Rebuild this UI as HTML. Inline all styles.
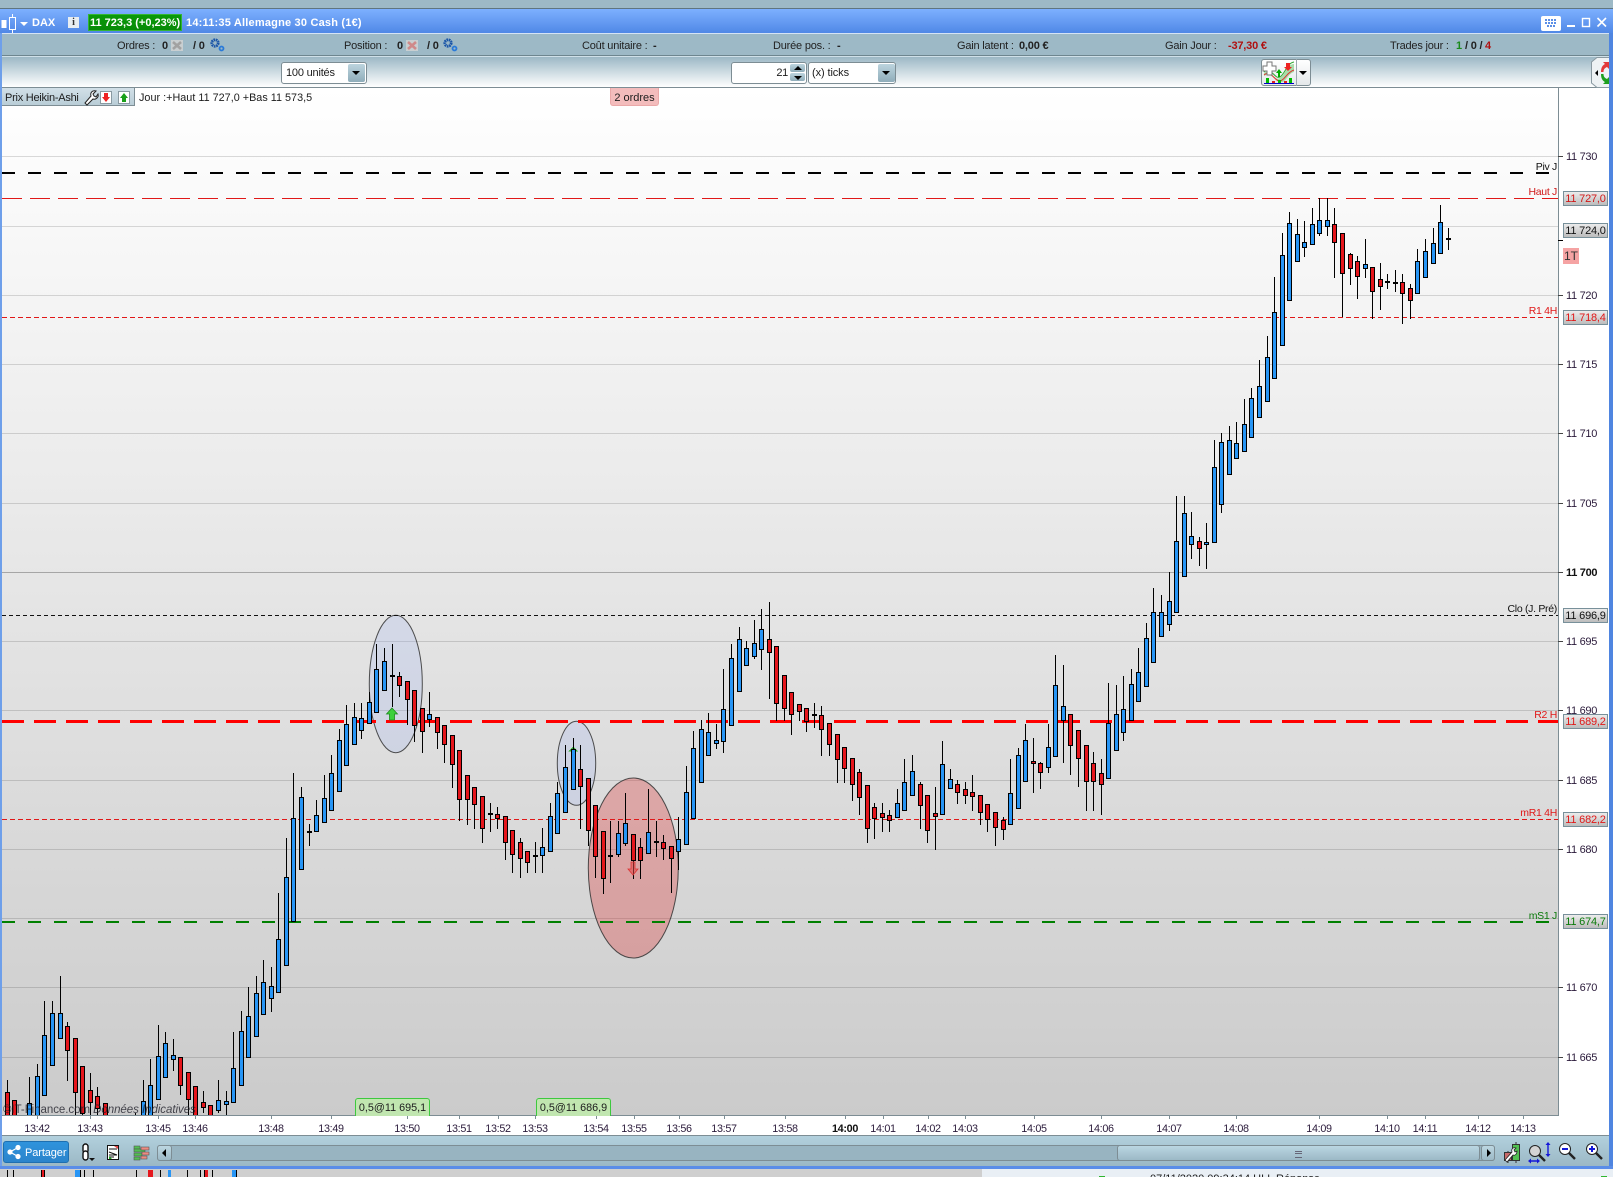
<!DOCTYPE html>
<html><head><meta charset="utf-8"><title>DAX</title>
<style>
html,body{margin:0;padding:0;width:1613px;height:1177px;overflow:hidden;background:#ccc}
body{position:relative;font-family:"Liberation Sans",sans-serif;font-size:11px;color:#1c1c1c}
.a{position:absolute}
.t{position:absolute;white-space:nowrap;line-height:14px;height:14px;letter-spacing:-.3px}
.s{font-size:11px;color:#222;top:39px;letter-spacing:-.2px}
.b{font-weight:bold}
.w{color:#fff}
.ax{left:1566px;font-size:11px;color:#2a1a3a}
.tm{top:1122px;width:40px;text-align:center;font-size:10.8px;color:#2a1a3a}
.lb{font-size:10.5px;text-align:right;right:56px}
.box{position:absolute;left:1563px;width:43px;height:13px;border:1px solid #78909a;outline:0;background:linear-gradient(#ececec,#bcbcbc);font-size:11px;line-height:14px;text-align:center;letter-spacing:-.2px;white-space:nowrap}
.sel{position:absolute;background:#fff;border:1px solid #7d8d94;border-radius:3px;box-sizing:border-box}
.btn{position:absolute;background:linear-gradient(#bcd4de,#8fadba);border-radius:2px}
.tri{position:absolute;width:0;height:0;border-left:4px solid transparent;border-right:4px solid transparent;border-top:4px solid #000}
svg{position:absolute;overflow:visible}
</style></head>
<body>
<!-- top band -->
<div class="a" style="left:0;top:0;width:1613px;height:8px;background:#9db9c6;border-bottom:1px solid #5f7580"></div>
<!-- title bar -->
<div class="a" style="left:0;top:9px;width:1613px;height:24px;background:linear-gradient(#7db0ff,#5088e6)"></div>
<svg style="left:0;top:10px" width="20" height="24"><rect x="1.5" y="10" width="5" height="8" fill="#fff"/><rect x="9.5" y="7.5" width="6" height="12" fill="none" stroke="#fff"/><path d="M12.5 4V7M12.5 20V23" stroke="#fff"/></svg>
<div class="tri" style="left:20px;top:22px;border-top-color:#fff"></div>
<div class="t b w" style="left:32px;top:16px;letter-spacing:0">DAX</div>
<div class="a" style="left:68px;top:17px;width:11px;height:11px;background:#e8eef2;color:#333;font:bold 10px/11px 'Liberation Serif',serif;text-align:center">i</div>
<div class="a" style="left:88px;top:14px;width:92px;height:15px;background:linear-gradient(#0a9a0a,#088a08);border:1px solid #33b533"></div>
<div class="t b w" style="left:90px;top:15.5px;letter-spacing:0">11 723,3 (+0,23%)</div>
<div class="t b w" style="left:186px;top:16px;letter-spacing:.2px">14:11:35 Allemagne 30 Cash (1€)</div>
<svg style="left:1541px;top:15px" width="70" height="18"><rect x="0" y="1" width="20" height="15" rx="2" fill="#fff"/><path d="M4 5h12M4 8h12M6 11h8" stroke="#5b8ee6" stroke-width="2" stroke-dasharray="2 1"/><rect x="26" y="10" width="8" height="2" fill="#fff"/><rect x="41.5" y="3.5" width="7" height="8" fill="none" stroke="#fff" stroke-width="1.4"/><path d="M56.5 3L65 11.5M65 3L56.5 11.5" stroke="#fff" stroke-width="1.6"/></svg>
<!-- stats bar -->
<div class="a" style="left:0;top:33px;width:1613px;height:1px;background:#d5e3f5"></div>
<div class="a" style="left:0;top:34px;width:1609px;height:21px;background:#9db9c6;border-bottom:1px solid #6e868f"></div>
<div class="a" style="left:0;top:56px;width:1609px;height:1px;background:#cfe0e8"></div>
<div class="t s" style="left:117px">Ordres :</div><div class="t s b" style="left:162px">0</div>
<svg style="left:171px;top:40px" width="12" height="11"><rect width="12" height="11" fill="#c9cfd1"/><path d="M2 2L10 9M10 2L2 9" stroke="#a2a2a2" stroke-width="2.6"/></svg>
<div class="t s b" style="left:193px">/ 0</div>
<svg style="left:209px;top:38px" width="16" height="14"><circle cx="6" cy="5" r="3.2" fill="none" stroke="#1a55a8" stroke-width="2.8" stroke-dasharray="1.6 .6"/><circle cx="12.5" cy="10.5" r="2" fill="none" stroke="#2a7ad8" stroke-width="1.8"/></svg>
<div class="t s" style="left:344px">Position :</div><div class="t s b" style="left:397px">0</div>
<svg style="left:406px;top:40px" width="12" height="11"><rect width="12" height="11" fill="#c9cfd1"/><path d="M2 2L10 9M10 2L2 9" stroke="#cf8a8a" stroke-width="2.6"/></svg>
<div class="t s b" style="left:427px">/ 0</div>
<svg style="left:442px;top:38px" width="16" height="14"><circle cx="6" cy="5" r="3.2" fill="none" stroke="#1a55a8" stroke-width="2.8" stroke-dasharray="1.6 .6"/><circle cx="12.5" cy="10.5" r="2" fill="none" stroke="#2a7ad8" stroke-width="1.8"/></svg>
<div class="t s" style="left:582px">Coût unitaire :</div><div class="t s b" style="left:653px">-</div>
<div class="t s" style="left:773px">Durée pos. :</div><div class="t s b" style="left:837px">-</div>
<div class="t s" style="left:957px">Gain latent :</div><div class="t s b" style="left:1019px">0,00 €</div>
<div class="t s" style="left:1165px">Gain Jour :</div><div class="t s b" style="left:1228px;color:#b01010">-37,30 €</div>
<div class="t s" style="left:1390px">Trades jour :</div>
<div class="t s b" style="left:1456px;color:#1a8a1a">1</div><div class="t s b" style="left:1465px">/ 0 /</div><div class="t s b" style="left:1485px;color:#b01010">4</div>
<!-- toolbar -->
<div class="a" style="left:0;top:57px;width:1609px;height:30px;background:linear-gradient(#9cb8c5,#fff);border-bottom:1px solid #7d8d94"></div>
<div class="sel" style="left:281px;top:62px;width:86px;height:22px"></div>
<div class="t" style="left:286px;top:66px;letter-spacing:-.2px">100 unités</div>
<div class="btn" style="left:348px;top:64px;width:17px;height:18px"></div><div class="tri" style="left:352px;top:71px"></div>
<div class="sel" style="left:731px;top:62px;width:76px;height:22px"></div>
<div class="t" style="left:774px;top:66px;width:14px;text-align:right">21</div>
<div class="btn" style="left:790px;top:64px;width:15px;height:8px"></div><div class="btn" style="left:790px;top:73px;width:15px;height:8px"></div>
<div class="tri" style="left:794px;top:66px;border-top:0;border-bottom:4px solid #000"></div><div class="tri" style="left:794px;top:76px"></div>
<div class="sel" style="left:808px;top:62px;width:88px;height:22px"></div>
<div class="t" style="left:812px;top:66px;letter-spacing:-.1px">(x) ticks</div>
<div class="btn" style="left:878px;top:64px;width:17px;height:18px"></div><div class="tri" style="left:882px;top:71px"></div>
<div class="sel" style="left:1261px;top:59px;width:50px;height:27px;background:linear-gradient(#fff,#e4e8ea)"></div>
<div class="a" style="left:1296px;top:59px;width:1px;height:27px;background:#9aa8ae"></div>
<div class="tri" style="left:1299px;top:71px"></div>
<svg style="left:1263px;top:60px" width="33" height="25"><path d="M1 13C8 8 11 22 17 18S24 4 31 4L31 12C24 14 23 24 17 22S8 12 1 16Z" fill="#a8dca8"/><path d="M1 15C8 9 12 22 17 21S24 12 31 10" stroke="#d33" fill="none"/><path d="M1 12C8 6 12 20 17 17S24 3 31 2" stroke="#3a3" fill="none"/><path d="M4 2h5v4h4v5H9v4H4v-4H0V6h4z" fill="#fff" stroke="#777"/><path d="M13 13l3-4 3 4h-2v4h-2v-4z" fill="#0a0"/><path d="M23 3h4v4h2l-4 4-4-4h2z" fill="#e22"/><path d="M3 18h3v5H3zM15 20h3v3h-3zM26 18h3v5h-3z" fill="#0b0"/><path d="M9 21h3v2H9zM21 21h3v2h-3z" fill="#d22"/><rect x="1" y="23" width="30" height="1" fill="#00c"/></svg>
<!-- chart background -->
<div class="a" style="left:2px;top:88px;width:1556px;height:1027px;background:linear-gradient(#fff,#cbcbcb)"></div>
<div class="a" style="left:1558px;top:88px;width:51px;height:1047px;background:#fff"></div>
<div class="a" style="left:0;top:1115px;width:1609px;height:20px;background:#fff"></div>
<div class="a" style="left:1558px;top:88px;width:1px;height:1028px;background:#7d8d94"></div>
<div class="a" style="left:0;top:1115px;width:1559px;height:1px;background:#7d8d94"></div>
<!-- chart svg -->
<svg style="left:0;top:0" width="1613" height="1177" shape-rendering="crispEdges">
<defs><clipPath id="cp"><rect x="2" y="88" width="1556" height="1027"/></clipPath></defs>
<g clip-path="url(#cp)">
<g fill="rgba(0,0,0,.14)">
<rect x="2" y="156" width="1556" height="1"/><rect x="2" y="226" width="1556" height="1"/><rect x="2" y="295" width="1556" height="1"/><rect x="2" y="364" width="1556" height="1"/><rect x="2" y="433" width="1556" height="1"/><rect x="2" y="503" width="1556" height="1"/><rect x="2" y="641" width="1556" height="1"/><rect x="2" y="710" width="1556" height="1"/><rect x="2" y="780" width="1556" height="1"/><rect x="2" y="849" width="1556" height="1"/><rect x="2" y="918" width="1556" height="1"/><rect x="2" y="987" width="1556" height="1"/><rect x="2" y="1057" width="1556" height="1"/>
<rect x="2" y="572" width="1556" height="1" fill="rgba(0,0,0,.28)"/>
</g>
<g shape-rendering="auto">
<ellipse cx="395.8" cy="684" rx="26.5" ry="68.7" fill="rgba(170,185,240,.28)" stroke="#333" stroke-opacity=".85"/>
<ellipse cx="576.5" cy="763.3" rx="19.2" ry="42" fill="rgba(170,185,240,.28)" stroke="#333" stroke-opacity=".85"/>
<ellipse cx="633.3" cy="868" rx="45" ry="90" fill="rgba(220,70,70,.355)" stroke="#333" stroke-opacity=".85"/>
</g>
<path d="M2 173H1549" stroke="#000" stroke-width="2" stroke-dasharray="13 13"/>
<path d="M2 922H1558" stroke="#008000" stroke-width="2" stroke-dasharray="13 13"/>
<path d="M2 198.5H1558" stroke="#e01818" stroke-dasharray="20 8"/>
<path d="M2 317.5H1558M2 819.5H1558" stroke="#e01818" stroke-dasharray="5 3"/>
<path d="M2 615.5H1558" stroke="#111" stroke-dasharray="4 3"/>
<path d="M2 721.5H1558" stroke="#ff0000" stroke-width="3" stroke-dasharray="22 10"/>
<path d="M573 746.5l5 5h-3v2h-4v-2h-3z" fill="#2db52d"/>
<g id="cd"></g>
<g shape-rendering="auto">
<path d="M392 708l5.5 6h-3v6h-5v-6h-3z" fill="#3cd03c" stroke="#1c8a1c" stroke-width=".8"/>
<path d="M631 862h4v7h3l-5 6-5-6h3z" fill="rgba(225,70,70,.55)" stroke="#d33" stroke-width=".8"/>
</g>
</g>
<!-- right ticks -->
<g fill="#444"><rect x="1558" y="156" width="5" height="1"/><rect x="1558" y="295" width="5" height="1"/><rect x="1558" y="364" width="5" height="1"/><rect x="1558" y="433" width="5" height="1"/><rect x="1558" y="503" width="5" height="1"/><rect x="1558" y="572" width="5" height="1"/><rect x="1558" y="641" width="5" height="1"/><rect x="1558" y="710" width="5" height="1"/><rect x="1558" y="780" width="5" height="1"/><rect x="1558" y="849" width="5" height="1"/><rect x="1558" y="987" width="5" height="1"/><rect x="1558" y="1057" width="5" height="1"/><rect x="1558" y="240" width="5" height="1" fill="#000"/>
</g>
<!-- time ticks -->
<path d="M37.5 1115v4M90.5 1115v4M158.5 1115v4M195.5 1115v4M271.5 1115v4M331.5 1115v4M407.5 1115v4M459.5 1115v4M498.5 1115v4M535.5 1115v4M596.5 1115v4M634.5 1115v4M679.5 1115v4M724.5 1115v4M785.5 1115v4M845.5 1115v4M883.5 1115v4M928.5 1115v4M965.5 1115v4M1034.5 1115v4M1101.5 1115v4M1169.5 1115v4M1236.5 1115v4M1319.5 1115v4M1387.5 1115v4M1425.5 1115v4M1478.5 1115v4M1523.5 1115v4" stroke="#7d8d94"/>
</svg>
<script>
(function(){var s='';
function G(ox,oy,L){L.forEach(function(c){var col=Math.floor(ox+c[0]/3),x=col+.5,
h=Math.round(oy+c[2]/3),t=Math.round(oy+c[3]/3),b=Math.round(oy+c[4]/3),l=Math.round(oy+c[5]/3);
if(b-t<2)b=t+2;
if(h<t)s+='<rect x="'+col+'" y="'+h+'" width="1" height="'+(t-h)+'" fill="#000"/>';
if(l>b)s+='<rect x="'+col+'" y="'+b+'" width="1" height="'+(l-b)+'" fill="#000"/>';
if(c[1]==2){s+='<rect x="'+(col-2)+'" y="'+t+'" width="5" height="2" fill="#000"/>';return;}
s+='<rect x="'+(col-2)+'" y="'+t+'" width="5" height="'+(b-t)+'" fill="#000"/>';
if(b-t>2)s+='<rect x="'+(col-1)+'" y="'+(t+1)+'" width="3" height="'+(b-t-2)+'" fill="'+(c[1]?'#2795f5':'#e5161c')+'"/>';
});}
G(0,950,[[22,0,390,427,520,560],[43,0,451,451,560,600],[88,1,381,460,560,600],[112,1,343,379,499,600],[133,1,153,256,439,439],[157,1,153,190,349,349],[181,1,78,190,268,268],[202,0,217,229,304,392],[226,0,265,265,430,500],[247,0,349,349,492,550],[271,0,370,421,460,500],[292,0,412,439,478,500],[316,0,460,460,520,560],[406,1,490,520,560,560],[430,1,391,454,560,560],[451,1,328,406,520,520],[475,1,226,319,451,451],[496,1,247,280,385,385],[520,1,268,316,331,362],[541,0,322,322,409,435],[565,0,367,367,451,495],[586,0,409,409,510,540],[610,0,424,457,475,490],[631,0,466,466,530,560],[655,1,391,451,484,490],[679,1,424,454,466,495],[700,1,247,355,460,460],[724,1,184,244,409,409],[745,1,112,199,325,325],[769,1,79,130,262,262],[790,1,30,97,196,196],[814,1,52,109,148,185]]);
G(270,760,[[25,1,399,538,700,700],[49,1,235,352,618,618],[70,1,40,175,485,485],[94,1,82,112,331,331],[118,1,193,214,220,258],[139,1,121,166,217,217],[163,1,46,115,190,190],[184,1,-15,40,154,154],[208,1,-93,-60,97,97],[229,1,-165,-108,19,19]]);
G(350,600,[[13,1,310,352,436,436],[34,1,310,355,394,418],[58,1,277,307,373,373],[79,1,133,208,340,340],[103,1,145,184,274,274],[127,2,133,226,231,322],[148,0,217,229,259,292],[172,0,244,244,301,375],[193,0,271,271,379,427],[217,0,325,325,397,458],[238,1,277,343,361,382],[262,0,352,352,400,446],[283,0,376,376,436,488],[307,0,406,406,496,564],[328,0,451,451,601,664],[352,0,526,526,601,674],[373,0,562,562,616,686],[397,0,589,589,688,728],[421,0,610,640,646,695],[442,0,622,643,658,686],[466,0,649,649,730,779],[487,0,691,691,766,818],[511,0,715,727,778,833],[532,0,754,754,790,818],[556,1,727,766,772,818],[577,1,685,742,769,818],[601,1,610,649,757,757],[622,1,547,580,703,703],[646,1,436,502,640,640],[670,1,415,446,571,571],[691,0,436,508,562,686],[715,0,535,535,694,738],[736,0,616,616,772,833],[760,0,694,694,838,881],[781,2,664,765,768,850],[805,1,664,700,766,770],[826,1,580,670,733,737],[850,0,703,703,784,838],[871,0,715,742,784,838],[895,1,568,697,763,763],[919,1,664,724,730,770],[940,0,706,727,748,779],[964,0,739,739,778,880],[985,1,652,718,757,810],[1009,1,499,577,736,736]]);
G(660,590,[[100,1,424,475,688,688],[124,1,391,418,580,580],[145,1,370,427,499,499],[169,1,403,451,463,476],[190,1,238,358,457,488],[214,1,163,205,409,409],[238,1,112,148,307,307],[259,1,154,175,229,229],[283,1,91,160,202,206],[304,1,58,118,181,239],[328,0,37,148,190,328],[349,0,169,169,343,392],[373,0,256,256,358,392],[394,0,307,307,376,434],[418,0,343,343,367,392],[439,0,355,355,397,425],[463,2,340,373,376,413],[484,0,349,376,421,497],[508,0,400,400,466,497],[532,0,433,433,511,578],[553,0,472,472,538,578],[577,0,505,505,586,632],[598,0,538,547,625,674],[622,0,586,586,718,758],[643,0,640,652,688,746],[667,0,640,670,685,725],[688,0,661,676,694,725],[712,1,598,640,685,685],[733,1,508,577,664,664],[757,1,496,544,619,619],[781,0,577,583,649,716],[802,0,616,616,724,758],[826,0,592,670,680,779],[847,1,454,523,676,676],[871,1,538,568,598,598],[892,0,571,583,610,641],[916,0,577,598,619,641],[937,0,556,607,622,662],[961,0,616,616,670,704],[982,0,643,643,691,725],[1006,0,667,667,715,767]]);
G(1000,480,[[10,0,1012,1020,1050,1080],[31,1,838,940,1035,1035],[55,1,805,826,988,988],[76,1,733,781,907,907],[100,0,775,844,853,940],[121,0,847,850,880,928],[145,1,733,802,865,880],[166,1,526,616,832,832],[190,1,556,679,724,848],[211,0,703,703,799,886],[235,0,751,751,838,922],[259,0,796,796,907,992],[280,0,817,850,907,992],[304,0,838,880,916,1004],[325,1,610,730,898,898],[349,1,616,703,814,814],[370,1,589,688,760,784],[394,1,568,613,724,724],[415,1,505,577,667,667],[439,1,430,475,622,622],[460,1,325,397,550,550],[484,1,346,397,472,472],[508,1,277,364,436,452],[529,1,49,184,400,400],[553,1,49,100,292,292],[574,1,97,169,196,236],[598,0,172,184,208,257],[619,1,130,187,196,266]]);
G(1200,150,[[43,1,870,951,1179,1179],[64,1,850,877,1065,1089],[88,1,829,871,975,975],[109,1,817,880,927,927],[133,1,748,823,907,907],[154,1,715,745,865,865],[178,1,631,709,805,805],[202,1,559,622,757,757],[223,1,382,487,688,688],[247,1,250,316,589,589],[268,1,187,220,454,454],[292,1,208,253,337,337],[313,1,214,277,295,321],[337,1,175,223,286,286],[358,1,145,211,253,258],[382,1,145,211,232,258],[403,0,175,223,280,384],[427,0,250,250,373,502],[451,0,310,313,358,405],[472,0,319,334,382,447],[496,1,268,343,358,385],[517,0,352,352,427,507],[541,0,340,388,412,480],[562,1,373,394,400,417],[586,2,361,396,399,426],[607,0,373,397,433,522],[631,0,403,415,454,507],[652,1,298,334,433,433],[676,1,268,304,385,385],[700,1,235,280,343,343],[720,1,165,217,313,313]]);
G(1440,140,[[25,0,265,295,301,330]]);
document.getElementById('cd').innerHTML=s;
})();
</script>
<!-- axis labels -->
<div class="t ax" style="top:150px">11 730</div><div class="t ax" style="top:289px">11 720</div><div class="t ax" style="top:358px">11 715</div><div class="t ax" style="top:427px">11 710</div><div class="t ax" style="top:497px">11 705</div><div class="t ax b" style="top:566px;color:#111">11 700</div><div class="t ax" style="top:635px">11 695</div><div class="t ax" style="top:704px">11 690</div><div class="t ax" style="top:774px">11 685</div><div class="t ax" style="top:843px">11 680</div><div class="t ax" style="top:981px">11 670</div><div class="t ax" style="top:1051px">11 665</div>
<!-- value boxes -->
<div class="box" style="top:191px;color:#d01818">11 727,0</div>
<div class="box" style="top:223px;color:#111">11 724,0</div>
<div class="box" style="top:310px;color:#e01818">11 718,4</div>
<div class="box" style="top:608px;color:#111">11 696,9</div>
<div class="box" style="top:714px;color:#e01818">11 689,2</div>
<div class="box" style="top:812px;color:#e01818">11 682,2</div>
<div class="box" style="top:914px;color:#0a7a0a">11 674,7</div>
<div class="a" style="left:1563px;top:248px;width:16px;height:16px;background:#f5a3a3;color:#333;font-size:12px;line-height:16px;text-align:center">1T</div>
<!-- line labels -->
<div class="t lb" style="top:160px;color:#111">Piv J</div>
<div class="t lb" style="top:185px;color:#d01818">Haut J</div>
<div class="t lb" style="top:304px;color:#e01818">R1 4H</div>
<div class="t lb" style="top:602px;color:#111">Clo (J. Pré)</div>
<div class="t lb" style="top:708px;color:#e01818">R2 H</div>
<div class="t lb" style="top:806px;color:#e01818">mR1 4H</div>
<div class="t lb" style="top:909px;color:#0a7a0a">mS1 J</div>
<!-- header chips -->
<div class="a" style="left:2px;top:88px;width:132px;height:17px;background:linear-gradient(#d2e0e8,#b9cdd7);border-right:1px solid #7d8d94;border-bottom:1px solid #7d8d94"></div>
<div class="t" style="left:5px;top:91px;font-size:11px;letter-spacing:-.25px">Prix Heikin-Ashi</div>
<svg style="left:83px;top:89px" width="48" height="16"><path d="M2 14l6-7C7 4 9 1 13 2l-3 3 1 2 2 1 2-3c1 3-2 6-5 5l-6 6z" fill="#fff" stroke="#222"/><rect x="17.500" y="2.500" width="11" height="12" fill="#fff" stroke="#8a9aa2"/><path d="M21 4h4v4h2l-4 5-4-5h2z" fill="#e22"/><rect x="35.500" y="2.500" width="11" height="12" fill="#fff" stroke="#8a9aa2"/><path d="M41 4l4 5h-2v4h-4V9h-2z" fill="#1aa01a"/></svg>
<div class="t" style="left:139px;top:91px;font-size:10.8px;letter-spacing:.02px">Jour :+Haut 11 727,0 +Bas 11 573,5</div>
<div class="a" style="left:610px;top:88px;width:47px;height:17px;background:#f3bcbc;border:1px solid #eaa8a8;border-top:0;border-radius:0 0 3px 3px;font-size:11px;line-height:20px;text-align:center;white-space:nowrap">2 ordres</div>
<!-- order tags -->
<div class="a" style="left:355px;top:1098px;width:73px;height:17px;background:#c1e6b0;border:1px solid #3ec83e;border-bottom:0;border-radius:3px 3px 0 0;font-size:10.8px;line-height:19px;text-align:center;white-space:nowrap">0,5@11 695,1</div>
<div class="a" style="left:536px;top:1098px;width:73px;height:17px;background:#c1e6b0;border:1px solid #3ec83e;border-bottom:0;border-radius:3px 3px 0 0;font-size:10.8px;line-height:19px;text-align:center;white-space:nowrap">0,5@11 686,9</div>
<div class="t" style="left:3px;top:1103px;font-size:11.5px;color:rgba(30,30,40,.8);letter-spacing:-.05px">©IT-Finance.com <i>Données Indicatives</i></div>
<!-- time labels -->
<div class="t tm" style="left:17px">13:42</div><div class="t tm" style="left:70px">13:43</div><div class="t tm" style="left:138px">13:45</div><div class="t tm" style="left:175px">13:46</div><div class="t tm" style="left:251px">13:48</div><div class="t tm" style="left:311px">13:49</div><div class="t tm" style="left:387px">13:50</div><div class="t tm" style="left:439px">13:51</div><div class="t tm" style="left:478px">13:52</div><div class="t tm" style="left:515px">13:53</div><div class="t tm" style="left:576px">13:54</div><div class="t tm" style="left:614px">13:55</div><div class="t tm" style="left:659px">13:56</div><div class="t tm" style="left:704px">13:57</div><div class="t tm" style="left:765px">13:58</div><div class="t tm b" style="left:825px;color:#111">14:00</div><div class="t tm" style="left:863px">14:01</div><div class="t tm" style="left:908px">14:02</div><div class="t tm" style="left:945px">14:03</div><div class="t tm" style="left:1014px">14:05</div><div class="t tm" style="left:1081px">14:06</div><div class="t tm" style="left:1149px">14:07</div><div class="t tm" style="left:1216px">14:08</div><div class="t tm" style="left:1299px">14:09</div><div class="t tm" style="left:1367px">14:10</div><div class="t tm" style="left:1405px">14:11</div><div class="t tm" style="left:1458px">14:12</div><div class="t tm" style="left:1503px">14:13</div>
<!-- bottom bar -->
<div class="a" style="left:0;top:1135px;width:1609px;height:31px;background:linear-gradient(#b2d0dd,#9bb8c5);border-top:1px solid #7d8d94;box-sizing:border-box"></div>
<div class="a" style="left:3px;top:1141px;width:66px;height:22px;background:linear-gradient(#2f93dc,#2a84cc);border:1px solid #1e6fb0;border-radius:3px;box-sizing:border-box"></div>
<svg style="left:6px;top:1144px" width="16" height="16"><path d="M12 3.5L4 8l8 4.5" stroke="#fff" fill="none" stroke-width="1.2"/><circle cx="12" cy="3.5" r="2.6" fill="#fff"/><circle cx="4" cy="8" r="2.6" fill="#fff"/><circle cx="12" cy="12.5" r="2.6" fill="#fff"/></svg>
<div class="t w" style="left:25px;top:1146px;letter-spacing:-.1px">Partager</div>
<svg style="left:80px;top:1143px" width="16" height="20"><rect x="3" y="1" width="5" height="9" rx="2.5" fill="#fff" stroke="#111" stroke-width="1.4"/><rect x="3" y="8" width="5" height="9" rx="2.5" fill="#fff" stroke="#111" stroke-width="1.4"/><path d="M9 15h6l-3 3z" fill="#111"/></svg>
<svg style="left:107px;top:1145px" width="13" height="16"><rect x=".5" y=".5" width="11" height="14" fill="#fff" stroke="#111"/><path d="M2 4h8M2 7l8 3M2 10h8M2 12h5" stroke="#111"/><path d="M7 1h4v3z" fill="#d44"/><path d="M2 14v-3l3 3z" fill="#2a2"/></svg>
<svg style="left:133px;top:1145px" width="17" height="16"><g stroke="#555" stroke-width=".6"><rect x="1" y="1" width="6" height="3" fill="#52c052"/><rect x="1" y="4" width="11" height="3" fill="#52c052"/><rect x="8" y="2" width="8" height="3" fill="#ee8a80"/><rect x="1" y="8" width="8" height="3" fill="#52c052"/><rect x="9" y="7" width="7" height="3" fill="#ee8a80"/><rect x="1" y="12" width="6" height="3" fill="#52c052"/><rect x="8" y="11" width="6" height="3" fill="#ee8a80"/></g></svg>
<div class="a" style="left:157px;top:1145px;width:1338px;height:16px;background:#98b4c1;border:1px solid #7d8d94;border-radius:3px;box-sizing:border-box"></div>
<div class="a" style="left:157px;top:1145px;width:15px;height:16px;background:linear-gradient(#bcd6e1,#9cb9c6);border:1px solid #7d8d94;border-radius:3px;box-sizing:border-box"></div>
<div class="a" style="left:162px;top:1149px;border-top:4px solid transparent;border-bottom:4px solid transparent;border-right:4px solid #000"></div>
<div class="a" style="left:1117px;top:1145px;width:363px;height:16px;background:linear-gradient(#bad6e2,#9cb9c6);border:1px solid #7d8d94;border-radius:3px;box-sizing:border-box"></div>
<div class="a" style="left:1295px;top:1151px;width:7px;height:5px;border-top:1px solid #667;border-bottom:1px solid #667"></div>
<div class="a" style="left:1295px;top:1153px;width:7px;height:1px;background:#667"></div>
<div class="a" style="left:1481px;top:1145px;width:14px;height:16px;background:linear-gradient(#bcd6e1,#9cb9c6);border:1px solid #7d8d94;border-radius:3px;box-sizing:border-box"></div>
<div class="a" style="left:1487px;top:1149px;border-top:4px solid transparent;border-bottom:4px solid transparent;border-left:4px solid #000"></div>
<svg style="left:1503px;top:1141px" width="102" height="24"><path d="M5 10v12M13 1v21" stroke="#333"/><rect x="1.5" y="11.5" width="7" height="8" fill="#c96a6a" stroke="#333"/><rect x="9.5" y="3.5" width="7" height="16" fill="#52c052" stroke="#333"/><path d="M2 19l7-8c-1-3 1-5 4-4l-2 2 1 2 2-1c0 3-2 5-4 4l-6 7z" fill="#fff" stroke="#222" stroke-width=".8"/>
<circle cx="32" cy="10" r="5.5" fill="#d4d4d4" stroke="#222"/><path d="M36 14l6 6" stroke="#222" stroke-width="2.4"/><path d="M45 3v11M27 20h8" stroke="#1418d8" stroke-width="1.4"/><path d="M45 1l-2.5 3h5zM45 16l-2.5-3h5zM25 20l3-2.5v5zM37 20l-3-2.5v5z" fill="#1418d8"/>
<circle cx="62" cy="8" r="5.5" fill="#fff" stroke="#222"/><path d="M59 8h6" stroke="#1418d8" stroke-width="2"/><path d="M66 12l6 6" stroke="#222" stroke-width="2.4"/>
<circle cx="89" cy="8" r="5.5" fill="#fff" stroke="#222"/><path d="M86 8h6M89 5v6" stroke="#1418d8" stroke-width="2"/><path d="M93 12l6 6" stroke="#222" stroke-width="2.4"/></svg>
<!-- borders -->
<div class="a" style="left:0;top:1166px;width:1613px;height:3px;background:#5a8de8"></div>
<div class="a" style="left:0;top:33px;width:2px;height:1133px;background:#6e9fea"></div>
<div class="a" style="left:1609px;top:33px;width:4px;height:1133px;background:#4f85e0"></div>
<!-- right tab -->
<svg style="left:1591px;top:57px" width="19" height="31"><path d="M18 .5H6L.5 5V26L6 30.5H18" fill="#eef2f4" stroke="#8a9aa2"/><path d="M4 16l3-3v6z" fill="#000"/><path d="M10 15C10 10 12 8 14 7L12 5h6v7l-2-2C14 11 12.500 12 12.500 15z" fill="#e23a3a"/><path d="M10 17C10 22 12 24 14 25l-2 2h6v-7l-2 2C14 21 12.500 20 12.500 17z" fill="#1fa01f"/></svg>
<!-- below strip -->
<div class="a" style="left:0;top:1169px;width:982px;height:8px;background:#cfcfcf"></div>
<svg style="left:0;top:1170px" width="240" height="7"><path d="M7.500 0v7M13.500 0v7M41.500 0v7M44.500 0v7M75.500 0v7M80.500 0v7M84.500 0v7M93.500 0v7M136.500 0v7M150.500 0v7M160.500 0v7M170.500 0v7M187.500 0v7M200.500 0v7M204.500 0v7M212.500 0v7M232.500 0v7M236.500 0v7" stroke="#000"/><rect x="42" y="0" width="2" height="7" fill="#e5161c"/><rect x="148" y="0" width="5" height="7" fill="#e5161c"/><rect x="75" y="0" width="5" height="7" fill="#2795f5"/><rect x="168" y="0" width="3" height="7" fill="#2795f5"/><rect x="205" y="0" width="3" height="7" fill="#e5161c"/><rect x="232" y="0" width="4" height="7" fill="#2795f5"/></svg>
<div class="a" style="left:982px;top:1169px;width:631px;height:8px;background:#e9eff5;overflow:hidden">
<div class="a" style="left:117px;top:7px;width:6px;height:4px;background:#2fb52f"></div>
<div class="a" style="left:619px;top:7px;width:6px;height:4px;background:#2fb52f"></div>
<div class="t" style="left:168px;top:3px;font-size:11px;letter-spacing:0">07/11/2020 09:34:14 HLL Réponse</div></div>
</body></html>
